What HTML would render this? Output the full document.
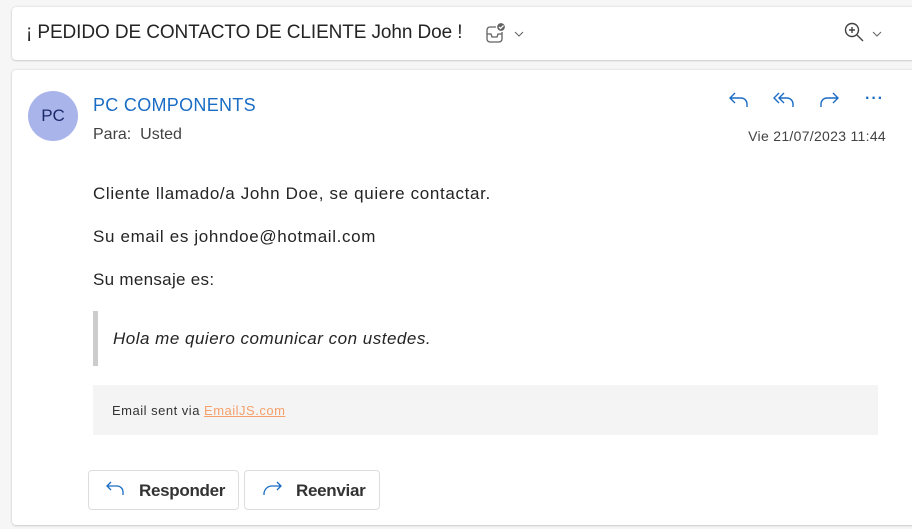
<!DOCTYPE html>
<html><head><meta charset="utf-8"><style>
body{margin:0;width:912px;height:529px;background:#f6f6f6;font-family:"Liberation Sans",sans-serif;color:#242424;position:relative;overflow:hidden}
.card{position:absolute;background:#fff;border-radius:4px;box-shadow:0 0 2px rgba(0,0,0,.15),0 1px 2px rgba(0,0,0,.12)}
.a{position:absolute;white-space:nowrap}
svg{position:absolute}
.b{font-size:17px;letter-spacing:0.65px}
</style></head><body>
<div class="card" style="left:12px;top:7px;width:906px;height:53px"></div>
<div class="a" style="left:26px;top:22px;font-size:19px;letter-spacing:-0.1px;color:#242424">¡ PEDIDO DE CONTACTO DE CLIENTE John Doe !</div>
<svg style="left:485px;top:22px" width="24" height="22" viewBox="0 0 24 22" fill="none" stroke="#616161" stroke-width="1.3"><rect x="2" y="5" width="15" height="15" rx="3"/><path d="M2 12h4l1 3h5l1-3h4"/><circle cx="16" cy="5" r="4.5" fill="#616161" stroke="#fff"/><path d="M14 5l1.5 1.5 3-3" stroke="#fff"/></svg>
<svg style="left:514px;top:30px" width="10" height="8" fill="none" stroke="#616161"><path d="M1 2l4 4 4-4"/></svg>
<svg style="left:843px;top:21px" width="22" height="22" fill="none" stroke="#424242" stroke-width="1.4"><circle cx="9" cy="9" r="6.5"/><path d="M14 14l6 6M9 6v6M6 9h6"/></svg>
<svg style="left:872px;top:30px" width="10" height="8" fill="none" stroke="#616161"><path d="M1 2l4 4 4-4"/></svg>

<div class="card" style="left:12px;top:70px;width:906px;height:455px;border-radius:4px"></div>
<div class="a" style="left:28px;top:91px;width:50px;height:50px;border-radius:50%;background:#a9b4ea;color:#1c2a6b;font-size:17px;text-align:center;line-height:50px">PC</div>
<div class="a" style="left:93px;top:95px;font-size:18px;letter-spacing:0.3px;color:#1a6cc4">PC COMPONENTS</div>
<div class="a" style="left:93px;top:126px;font-size:16px;color:#424242">Para:&nbsp; Usted</div>
<div class="a" style="right:26px;top:128px;font-size:14px;letter-spacing:0.3px;color:#424242">Vie 21/07/2023 11:44</div>
<svg style="left:728px;top:90px" width="24" height="20" fill="none" stroke="#1a6cc4" stroke-width="1.4"><path d="M7 3L2 8l5 5M2 8h11a6 6 0 0 1 6 6v3"/></svg>
<svg style="left:772px;top:90px" width="26" height="20" fill="none" stroke="#1a6cc4" stroke-width="1.4"><path d="M7 3L2 8l5 5M12 3L7 8l5 5M7 8h8a6 6 0 0 1 6 6v3"/></svg>
<svg style="left:818px;top:90px" width="24" height="20" fill="none" stroke="#1a6cc4" stroke-width="1.4"><path d="M15 3l5 5-5 5M20 8H9a6 6 0 0 0-6 6v3"/></svg>
<div class="a" style="left:865px;top:90px;font-size:16px;color:#1a6cc4;font-weight:bold;letter-spacing:1px">···</div>

<div class="a b" style="left:93px;top:184px">Cliente llamado/a John Doe, se quiere contactar.</div>
<div class="a b" style="left:93px;top:227px">Su email es johndoe@hotmail.com</div>
<div class="a b" style="left:93px;top:270px;letter-spacing:0.3px">Su mensaje es:</div>
<div class="a" style="left:93px;top:311px;width:5px;height:55px;background:#ccc"></div>
<div class="a b" style="left:113px;top:329px;font-style:italic;letter-spacing:0.5px">Hola me quiero comunicar con ustedes.</div>
<div class="a" style="left:93px;top:385px;width:785px;height:50px;background:#f4f4f4"></div>
<div class="a" style="left:112px;top:403px;font-size:13px;letter-spacing:0.5px;color:#333">Email sent via <span style="color:#f5a06b;text-decoration:underline">EmailJS.com</span></div>

<div class="a" style="left:88px;top:470px;width:149px;height:38px;border:1px solid #ddd;border-radius:4px;background:#fff"></div>
<svg style="left:105px;top:480px" width="22" height="18" fill="none" stroke="#1a6cc4" stroke-width="1.3"><path d="M6 2L2 6l4 4M2 6h10a6 6 0 0 1 6 6v3"/></svg>
<div class="a" style="left:139px;top:481px;font-size:17px;font-weight:bold;letter-spacing:-0.3px;color:#333">Responder</div>
<div class="a" style="left:244px;top:470px;width:134px;height:38px;border:1px solid #ddd;border-radius:4px;background:#fff"></div>
<svg style="left:261px;top:480px" width="24" height="18" fill="none" stroke="#1a6cc4" stroke-width="1.3"><path d="M16 2l4 4-4 4M20 6h-9a8 8 0 0 0-8 8v1"/></svg>
<div class="a" style="left:296px;top:481px;font-size:17px;font-weight:bold;letter-spacing:-0.3px;color:#333">Reenviar</div>
</body></html>
